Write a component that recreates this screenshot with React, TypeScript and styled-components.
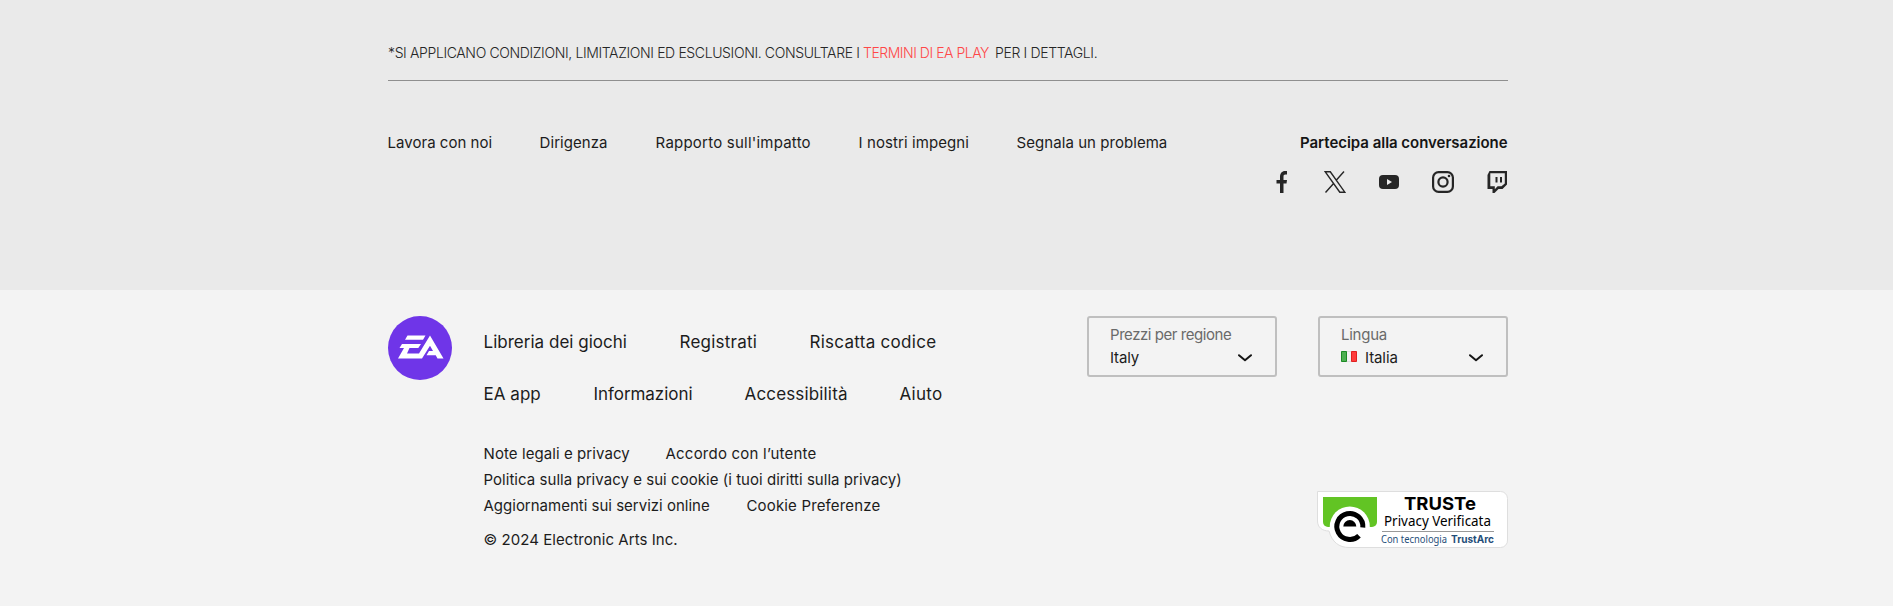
import React from 'react';
import styled, { createGlobalStyle } from 'styled-components';

const Global = createGlobalStyle`
  *{box-sizing:border-box}
  body{margin:0;background:#f3f3f3;font-family:Inter,"Liberation Sans",sans-serif;font-weight:400;color:#1c1c1c}
  a{color:inherit;text-decoration:none}
`;
const Upper = styled.section`height:290px;background:#eaeaea;padding:43px 385px 0 388px;`;
const Terms = styled.p`
  margin:0;height:38px;border-bottom:1px solid #8f8f8f;display:flex;
  font-size:14px;line-height:20px;font-weight:300;color:#262626;white-space:pre;
`;
const Text = styled.span<{ $w: number; $s?: number }>`
  display:block;width:${p => p.$w}px;letter-spacing:${p => p.$s ?? 0}px;white-space:nowrap;flex:none;
`;
const Red = styled(Text)`color:#ff4747;`;
const NavRow = styled.div`display:flex;justify-content:space-between;padding-top:52px;`;
const Row = styled.div<{ $gap: number; $size: number; $lh: number }>`
  display:flex;gap:${p => p.$gap}px;font-size:${p => p.$size}px;line-height:${p => p.$lh}px;
`;
const NavLinks = styled(Row)`margin-left:-0.4px;`;
const Social = styled.div`display:flex;flex-direction:column;align-items:flex-end;`;
const Heading = styled.h2`margin:0;font-size:15px;line-height:20px;font-weight:600;color:#151515;`;
const Icons = styled.div`display:flex;gap:32px;padding-top:18px;svg{display:block;width:22px;height:22px}`;
const Lower = styled.footer`height:316px;padding:26px 385px 0 388px;display:flex;`;
const Logo = styled.svg`width:64px;height:64px;flex:none;`;
const Links = styled.div`margin-left:31.5px;padding-top:14px;flex:1;`;
const Spacer = styled.div<{ $h: number }>`height:${p => p.$h}px;`;
const Side = styled.div`display:flex;flex-direction:column;align-items:flex-end;`;
const Selects = styled.div`display:flex;gap:41px;`;
const Select = styled.div`
  width:190px;height:61px;border:2px solid #bfbfbf;border-radius:3px;padding:5px 23px 0 21px;
  font-size:15px;line-height:23px;
`;
const Label = styled.div`color:#6a6a6a;line-height:23px;white-space:nowrap;`;
const Value = styled.div`display:flex;align-items:center;`;
const Chevron = styled.svg`width:14px;height:8px;margin-left:auto;`;
const Flag = styled.svg`width:16px;height:11px;margin:0 8px 2px 0;`;
const Badge = styled.svg`width:192px;height:58px;margin-top:114px;display:block;`;

const Down = () => <Chevron viewBox="0 0 14 8"><path d="M1 1.200 7 6.200 13 1.200" fill="none" stroke="#151515" strokeWidth="2" strokeLinecap="round" strokeLinejoin="round" /></Chevron>;

export default function App() {
  return (
    <>
      <Global />
      <Upper>
        <Terms>
          <Text $w={475} $s={-0.37}>*SI APPLICANO CONDIZIONI, LIMITAZIONI ED ESCLUSIONI. CONSULTARE I</Text>
          <Red as="a" $w={132} $s={-0.47}>TERMINI DI EA PLAY</Red>
          <Text $w={102} $s={-0.35}>PER I DETTAGLI.</Text>
        </Terms>
        <NavRow>
          <NavLinks $gap={48} $size={15} $lh={20}>
            <Text $w={104} $s={0.02}>Lavora con noi</Text>
            <Text $w={68} $s={0.04}>Dirigenza</Text>
            <Text $w={155} $s={0.22}>Rapporto sull'impatto</Text>
            <Text $w={110} $s={0.08}>I nostri impegni</Text>
            <Text $w={151} $s={0.05}>Segnala un problema</Text>
          </NavLinks>
          <Social>
            <Heading><Text $w={208} $s={-0.03}>Partecipa alla conversazione</Text></Heading>
            <Icons>
              <svg viewBox="0 0 22 22"><path d="M10 22V12.500H6.500V9H10V6c0-3.700 2-6 5-6h2v3.500h-1.500c-1.600 0-2 .9-2 2.200V9H17l-.5 3.500h-3V22z" fill="#262626" /></svg>
              <svg viewBox="0 0 22 22"><path d="M1.300 .8h5l14.500 20.400h-5zM20 .5 12 9.500M9.800 12.300 1.500 21.500" fill="none" stroke="#262626" strokeWidth="1.400" /></svg>
              <svg viewBox="0 0 22 22"><rect x="1" y="4" width="20" height="14" rx="4" fill="#262626" /><path d="M9 8v6l5-3z" fill="#eaeaea" /></svg>
              <svg viewBox="0 0 22 22" fill="none" stroke="#262626" strokeWidth="2.200"><rect x="1.100" y="1.100" width="19.800" height="19.800" rx="5.500" /><circle cx="11" cy="11" r="4.600" /><circle cx="17" cy="5" r="1.300" fill="#262626" stroke="none" /></svg>
              <svg viewBox="0 0 22 22"><path d="M3.500 0H21v13.500L16.500 18h-4L8.500 22H6.500v-4H1.500V4zM4.300 2.300V15.200H8.800v3L11.600 15.200H15.500L18.800 12.400V2.300z" fill="#262626" fillRule="evenodd" /><path d="M10.500 6v5.500M15 6v5.500" stroke="#262626" strokeWidth="2" /></svg>
            </Icons>
          </Social>
        </NavRow>
      </Upper>
      <Lower>
        <Logo viewBox="0 0 64 64"><circle cx="32" cy="32" r="32" fill="#6f35e8" /><path d="M19.500 19.500H37.500L35 23.800H17zM14 28H33L30.300 32H21.500L19 37.500H31L42 19.500 55.500 42.500H49.500L47.700 39.300H38.500L41 35H45L42 29.700 34 42.500H10L16 32H11.500z" fill="#fff" /></Logo>
        <Links>
          <Row $gap={52} $size={17} $lh={24}>
            <Text $w={144} $s={0.02}>Libreria dei giochi</Text>
            <Text $w={78} $s={0.24}>Registrati</Text>
            <Text $w={127} $s={0.28}>Riscatta codice</Text>
          </Row>
          <Spacer $h={28} />
          <Row $gap={52} $size={17} $lh={24}>
            <Text $w={58} $s={0.03}>EA app</Text>
            <Text $w={99} $s={-0.05}>Informazioni</Text>
            <Text $w={103} $s={0.16}>Accessibilità</Text>
            <Text $w={43} $s={0.25}>Aiuto</Text>
          </Row>
          <Spacer $h={35} />
          <Row $gap={36} $size={15} $lh={26}>
            <Text $w={146} $s={0.08}>Note legali e privacy</Text>
            <Text $w={150} $s={0.22}>Accordo con l’utente</Text>
          </Row>
          <Row $gap={36} $size={15} $lh={26}>
            <Text $w={417} $s={0.04}>Politica sulla privacy e sui cookie (i tuoi diritti sulla privacy)</Text>
          </Row>
          <Row $gap={36} $size={15} $lh={26}>
            <Text $w={227}>Aggiornamenti sui servizi online</Text>
            <Text $w={134} $s={0.16}>Cookie Preferenze</Text>
          </Row>
          <Spacer $h={8} />
          <Row $gap={36} $size={15} $lh={26}>
            <Text $w={193} $s={0.05}>© 2024 Electronic Arts Inc.</Text>
          </Row>
        </Links>
        <Side>
          <Selects>
            <Select>
              <Label><Text $w={122} $s={-0.45}>Prezzi per regione</Text></Label>
              <Value><Text $w={29} $s={-0.15}>Italy</Text><Down /></Value>
            </Select>
            <Select>
              <Label><Text $w={45} $s={-0.25}>Lingua</Text></Label>
              <Value>
                <Flag viewBox="0 0 16 11"><path fill="#f2f2f2" stroke="#ddd" d="M.5 .5h15v10H.5z" /><path fill="#4caf50" stroke="#1b8a24" d="M.5 .5h5v10h-5z" /><path fill="#ff3b3b" stroke="#e02020" d="M10.500 .5h5v10h-5z" /></Flag>
                <Text $w={32} $s={-0.1}>Italia</Text><Down />
              </Value>
            </Select>
          </Selects>
          <Badge viewBox="0 0 192 58">
            <path d="M1.500 .5H184.500a7 7 0 0 1 7 7V49a7 7 0 0 1-7 7.500H33C23 56.500 16 51 13 40 6 40 1.500 36 1.500 30z" fill="#fff" stroke="#dedede" />
            <path d="M7 6H61V31a5 5 0 0 1-5 5H12a5 5 0 0 1-5-5z" fill="#62c424" />
            <circle cx="33.800" cy="35.500" r="20" fill="#fff" />
            <path d="M46.800 36.500A13 13 0 1 0 43 44.700" fill="none" stroke="#000" strokeWidth="5" />
            <path d="M27.300 35.500a6.500 6.500 0 0 1 13 0z" fill="#000" />
            <text x="88" y="19" fontFamily="Inter" fontWeight="700" fontSize="18" textLength="72" lengthAdjust="spacingAndGlyphs">TRUSTe</text>
            <text x="68" y="35" fontFamily="Noto Sans" fontSize="14" textLength="107" lengthAdjust="spacingAndGlyphs">Privacy Verificata</text>
            <path d="M66 40.500h112" stroke="#999" />
            <text x="65" y="52" fontFamily="Noto Sans" fontSize="10.500" fill="#1f4e79" textLength="66" lengthAdjust="spacingAndGlyphs">Con tecnologia</text>
            <text x="135" y="52" fontFamily="Inter" fontWeight="700" fontSize="10.500" fill="#1f4e79" textLength="43" lengthAdjust="spacingAndGlyphs">TrustArc</text>
          </Badge>
        </Side>
      </Lower>
    </>
  );
}
